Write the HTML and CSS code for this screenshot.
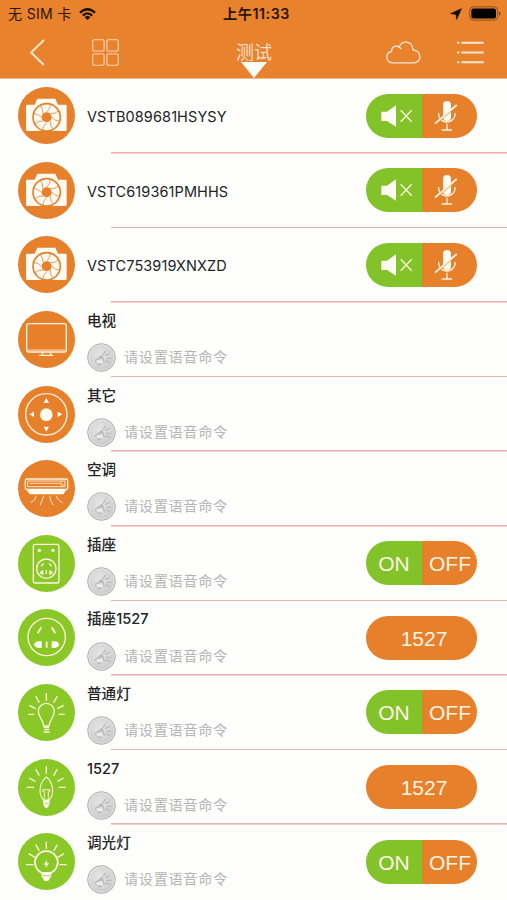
FILE: index.html
```html
<!DOCTYPE html>
<html lang="zh-CN">
<head>
<meta charset="utf-8">
<title>测试</title>
<link rel="stylesheet" href="styles.css">
</head>
<body>
<svg class="defs" width="0" height="0" aria-hidden="true">
  <defs>
    <radialGradient id="metal" cx="45%" cy="40%" r="60%"><stop offset="0" stop-color="#e6e6e6"/><stop offset=".7" stop-color="#d4d4d4"/><stop offset="1" stop-color="#c4c4c4"/></radialGradient>
  </defs>
  <symbol id="camera" viewBox="0 0 171 171">
    <path class="solid" d="M28 53H50L58 35H112L120 53H142Q146 53 146 57V128Q146 132 142 132H28Q24 132 24 128V57Q24 53 28 53Z"/>
    <g fill="none" stroke="#e6802b"><circle cx="86" cy="91" r="41" stroke-width="5"/>
    <g stroke-width="2.2"><path d="M86 75Q98 65 97 53"/><path d="M86 75Q98 65 97 53" transform="rotate(45 86 91)"/><path d="M86 75Q98 65 97 53" transform="rotate(90 86 91)"/><path d="M86 75Q98 65 97 53" transform="rotate(135 86 91)"/><path d="M86 75Q98 65 97 53" transform="rotate(180 86 91)"/><path d="M86 75Q98 65 97 53" transform="rotate(225 86 91)"/><path d="M86 75Q98 65 97 53" transform="rotate(270 86 91)"/><path d="M86 75Q98 65 97 53" transform="rotate(315 86 91)"/></g></g>
    <circle cx="86" cy="91" r="15" fill="#e6802b"/>
  </symbol>
  <symbol id="tv" viewBox="0 0 171 171">
    <g class="line"><rect x="26" y="38" width="119" height="85" rx="6"/><path d="M75 124L72 131M96 124L99 131M64 133H106"/></g><path class="line thin" d="M30 117H141"/>
  </symbol>
  <symbol id="remote" viewBox="0 0 171 171">
    <circle class="line" cx="85" cy="85" r="62"/><circle class="solid" cx="85" cy="86" r="19"/>
    <path class="solid" d="M85 36L93 51H77ZM85 137L93 122H77ZM34 85L48 77V93ZM133 85L119 77V93Z"/>
  </symbol>
  <symbol id="ac" viewBox="0 0 171 171">
    <path class="line" d="M27 57H144Q149 57 149 62V83Q149 88 144 89L135 101H36L27 89Q22 88 22 83V62Q22 57 27 57Z"/>
    <path class="solid" d="M27 86H144L135 101H36Z"/>
    <path class="line thin" d="M29 63V80H141V63ZM35 70H125M129 64V75H141"/>
    <path class="line thin" d="M55 107Q52 123 38 128M77 107Q73 123 66 136M95 107Q96 125 106 135M114 107Q120 123 134 129"/>
  </symbol>
  <symbol id="outlet" viewBox="0 0 171 171">
    <g class="line"><rect x="46" y="28" width="77" height="116" rx="6"/><circle cx="85" cy="101" r="29"/><path d="M77 85L69 94M93 85L101 94M85 106V117"/></g>
    <g class="solid"><circle cx="64" cy="46" r="5"/><circle cx="105" cy="46" r="5"/><path d="M65 111L76 105V120Q67 119 65 111ZM105 111L94 105V120Q103 119 105 111Z"/></g>
  </symbol>
  <symbol id="socket" viewBox="0 0 171 171">
    <circle class="line" cx="86" cy="84" r="56"/><path class="line thick" d="M70 55L59 73M101 55L112 73M86 98V116"/>
    <path class="solid" d="M71 97V117H61Q50 114 48 107Q51 98 61 97ZM101 97V117H111Q122 114 124 107Q121 98 111 97Z"/>
  </symbol>
  <symbol id="bulb" viewBox="0 0 171 171">
    <path class="line" d="M85 28V50M53 36L64 56M118 36L107 56M34 64L53 74M137 64L118 74M31 91H49M140 91H122"/>
    <path class="line" d="M77 126C76 107 61 100 61 82A24 24 0 0 1 109 82C109 100 95 107 93 126ZM77 131H93M79 137H94M77 144H95"/>
  </symbol>
  <symbol id="candle" viewBox="0 0 171 171">
    <path class="line" d="M85 22V44M53 30L64 50M118 30L107 50M33 57L52 67M137 57L118 67M26 85H48M144 85H122"/>
    <path class="line slim" d="M76 123C60 104 64 70 85 54C106 70 110 104 94 123Z"/>
    <path class="line thin" d="M79 123V97H74V92H96V97H91V123"/><path class="solid" d="M75 123H95V133Q93 145 85 148Q77 145 75 133Z"/><path d="M76 133H94" stroke="#8ac827" stroke-width="2"/>
  </symbol>
  <symbol id="dimmer" viewBox="0 0 171 171">
    <path class="line" d="M85 26V47M53 35L64 54M118 35L107 54M32 62L51 73M138 62L119 73M24 95H46M146 95H124"/>
    <path class="line thick" d="M73 120A34 34 0 1 1 97 120Z"/><path class="solid" d="M87 81L77 95H84L82 106L93 91H86ZM70 120H100V130L94 137V141Q85 147 76 141V137L70 130Z"/><path d="M71 128H99" stroke="#8ac827" stroke-width="2"/>
  </symbol>
  <symbol id="voice" viewBox="0 0 87 87">
    <circle cx="43.5" cy="43.5" r="41.5" fill="url(#metal)" stroke="#aeaeae" stroke-width="3"/><circle cx="43.5" cy="43.5" r="38" fill="none" stroke="#e6e6e6" stroke-width="3"/>
    <path d="M22 53L46 34L55 60L27 60Z" fill="#bcbcbc"/><path d="M26 53L45 47L50 61L31 60Z" fill="#ebebeb"/><path d="M54 38L68 31M57 46H73M56 53L68 59M48 34L56 24" stroke="#bababa" stroke-width="4"/><path d="M33 60V65H42V60" fill="none" stroke="#b4b4b4" stroke-width="3"/>
  </symbol>
  <symbol id="muted" viewBox="0 0 333 132">
    <path class="solid" d="M46 53H63L90 34V98L63 81H46Z"/><path class="line" d="M104 49L137 83M137 49L104 83"/>
    <rect class="solid" x="231" y="21" width="24" height="60" rx="12"/><path class="line" d="M218 57V64A25 25 0 0 0 267 64V57M243 89V107M227 108H258"/><path d="M213 86L275 34" stroke="#e6802b" stroke-width="4"/><path class="line thick" d="M207 89L272 33"/>
  </symbol>
</svg>

<header class="header">
  <div class="status">
    <span class="carrier">无 SIM 卡</span>
    <svg class="wifi" viewBox="0 0 54 38"><g fill="none" stroke="#160b04" stroke-width="7"><path d="M3 15Q27-7 51 15"/><path d="M12 24Q27 10 42 24"/></g><path fill="#160b04" d="M18 29Q27 22 36 29L27 38Z"/></svg>
    <span class="time">上午11:33</span>
    <svg class="locate" viewBox="0 0 36 36"><path fill="#120904" stroke="#120904" stroke-width="2" stroke-linejoin="round" d="M34 2L20 34L18 19L2 17Z"/></svg>
    <svg class="battery" viewBox="0 0 96 44"><rect x="2" y="2" width="84" height="40" rx="11" fill="none" stroke="#8d5120" stroke-width="3"/><rect x="7" y="7" width="74" height="30" rx="6"/><path d="M90 15Q98 22 90 29Z" fill="#6b3c18"/></svg>
  </div>
  <nav class="nav">
    <svg class="back" viewBox="0 0 44 80"><path d="M41 3L3 40L41 77"/></svg>
    <svg class="grid" viewBox="0 0 80 80"><rect x="2" y="2" width="34" height="34" rx="6"/><rect x="44" y="2" width="34" height="34" rx="6"/><rect x="2" y="44" width="34" height="34" rx="6"/><rect x="44" y="44" width="34" height="34" rx="6"/></svg>
    <div class="title"><h1>测试</h1><i class="pointer"></i></div>
    <svg class="cloud" viewBox="0 0 105 68"><path d="M18 65C-3 60-2 34 17 31C15 18 28 11 39 18C47-4 79-3 81 26C106 30 109 58 86 65Z"/><path d="M39 18Q44 20 46 24"/></svg>
    <svg class="menu" viewBox="0 0 80 68"><path d="M13 5H79M13 34H79M13 63H79M0 5H7M0 34H7M0 63H7"/></svg>
  </nav>
</header>

<main class="list">
  <section class="row"><svg class="icon orange"><use href="#camera"/></svg><div class="body"><h2 class="code">VSTB089681HSYSY</h2></div><div class="pill split"><svg><use href="#muted"/></svg></div></section>
  <section class="row"><svg class="icon orange"><use href="#camera"/></svg><div class="body"><h2 class="code">VSTC619361PMHHS</h2></div><div class="pill split"><svg><use href="#muted"/></svg></div></section>
  <section class="row"><svg class="icon orange"><use href="#camera"/></svg><div class="body"><h2 class="code">VSTC753919XNXZD</h2></div><div class="pill split"><svg><use href="#muted"/></svg></div></section>
  <section class="row"><svg class="icon orange"><use href="#tv"/></svg><div class="body"><h2>电视</h2><p><svg><use href="#voice"/></svg><span>请设置语音命令</span></p></div></section>
  <section class="row"><svg class="icon orange"><use href="#remote"/></svg><div class="body"><h2>其它</h2><p><svg><use href="#voice"/></svg><span>请设置语音命令</span></p></div></section>
  <section class="row"><svg class="icon orange"><use href="#ac"/></svg><div class="body"><h2>空调</h2><p><svg><use href="#voice"/></svg><span>请设置语音命令</span></p></div></section>
  <section class="row"><svg class="icon"><use href="#outlet"/></svg><div class="body"><h2>插座</h2><p><svg><use href="#voice"/></svg><span>请设置语音命令</span></p></div><div class="pill split"><span>ON</span><span>OFF</span></div></section>
  <section class="row"><svg class="icon"><use href="#socket"/></svg><div class="body"><h2>插座1527</h2><p><svg><use href="#voice"/></svg><span>请设置语音命令</span></p></div><div class="pill"><span>1527</span></div></section>
  <section class="row"><svg class="icon"><use href="#bulb"/></svg><div class="body"><h2>普通灯</h2><p><svg><use href="#voice"/></svg><span>请设置语音命令</span></p></div><div class="pill split"><span>ON</span><span>OFF</span></div></section>
  <section class="row"><svg class="icon"><use href="#candle"/></svg><div class="body"><h2>1527</h2><p><svg><use href="#voice"/></svg><span>请设置语音命令</span></p></div><div class="pill"><span>1527</span></div></section>
  <section class="row"><svg class="icon"><use href="#dimmer"/></svg><div class="body"><h2>调光灯</h2><p><svg><use href="#voice"/></svg><span>请设置语音命令</span></p></div><div class="pill split"><span>ON</span><span>OFF</span></div></section>
</main>
</body>
</html>
```
FILE: styles.css
```css
* { box-sizing: border-box; }
html, body { margin: 0; height: 900px; overflow: hidden; }
body { background: #fefefd; font-family: Inter, "Noto Sans CJK SC", sans-serif; color: #222; }
svg { display: block; flex: none; }
.defs { position: absolute; }
h1, h2, p { margin: 0; font-weight: 400; }

.header { height: 79px; background: #e8822d; border-bottom: 1px solid #f1b98a; }
.status { display: flex; align-items: center; height: 27px; padding-left: 8px; color: #2a1407; font-size: 14px; line-height: 27px; white-space: nowrap; }
.carrier { width: 71px; letter-spacing: .35px; }
.wifi { width: 17px; height: 12px; }
.time { margin-left: 127px; width: 68px; font-weight: 600; font-size: 14.2px; letter-spacing: .55px; }
.locate { width: 12px; height: 12px; margin-left: 159px; }
.battery { width: 32px; height: 15px; margin-left: 7px; }

.nav { display: flex; align-items: center; height: 51px; padding-left: 30px; }
.nav svg { fill: none; stroke: #fce5d1; stroke-linejoin: round; }
.back { width: 15px; height: 27px; stroke-width: 6; }
.grid { width: 27px; height: 27px; margin-left: 47px; stroke-width: 4; }
.nav .grid { stroke: #f7c59b; }
.title { display: flex; flex-direction: column; align-items: center; width: 40px; height: 51px; margin-left: 115px; padding-top: 13px; }
.title h1 { height: 22px; line-height: 26px; font-size: 18px; color: #fbdfc7; white-space: nowrap; }
.pointer { width: 26px; height: 16px; flex: none; background: #fffefb; clip-path: polygon(0 0, 100% 0, 50% 100%); }
.cloud { width: 35px; height: 23px; margin-left: 112px; stroke-width: 4; }
.menu { width: 27px; height: 23px; margin-left: 36px; stroke-width: 6; }

.row { display: flex; height: 74.6px; padding: 8.2px 0 0 18px; background: linear-gradient(#eeb0b0, #eeb0b0) 111px 73px / 396px 1.6px no-repeat; }
.row:last-child { background: none; }
.icon { width: 57px; height: 57px; border-radius: 50%; background: #8ac827; }
.icon.orange { background: #e6802b; }
.solid { fill: #fffaf2; }
.line { fill: none; stroke: #fff2df; stroke-width: 4; }
.line.slim { stroke-width: 3.2; }
.line.thin { stroke-width: 2.6; }
.line.thick { stroke-width: 5.5; }

.body { width: 279px; margin-left: 12px; white-space: nowrap; }
.body h2 { height: 20px; line-height: 21px; font-size: 14.6px; font-weight: 450; color: #242424; }
.body .code { height: 57px; line-height: 59px; font-size: 14.5px; font-weight: 400; letter-spacing: .1px; }
.body p { display: flex; align-items: center; gap: 8px; height: 29px; margin-top: 12.3px; color: #b5b5b5; font-size: 14.2px; letter-spacing: .65px; }
.body p svg { width: 29px; height: 29px; }
.body p span { height: 29px; line-height: 27px; }

.pill { display: flex; width: 111px; height: 44px; margin-top: 6.5px; border-radius: 22px; overflow: hidden; background: #e6802b; color: #fff4e4; font: 21px/46px "Liberation Sans", sans-serif; }
.pill.split { background: linear-gradient(90deg, #82c329 56px, #e6802b 56px); }
.pill svg { width: 111px; height: 44px; }
.pill span { flex: 1; padding-left: 5px; text-align: center; }
.pill.split span { flex: 0 0 56px; padding: 0; }
```
